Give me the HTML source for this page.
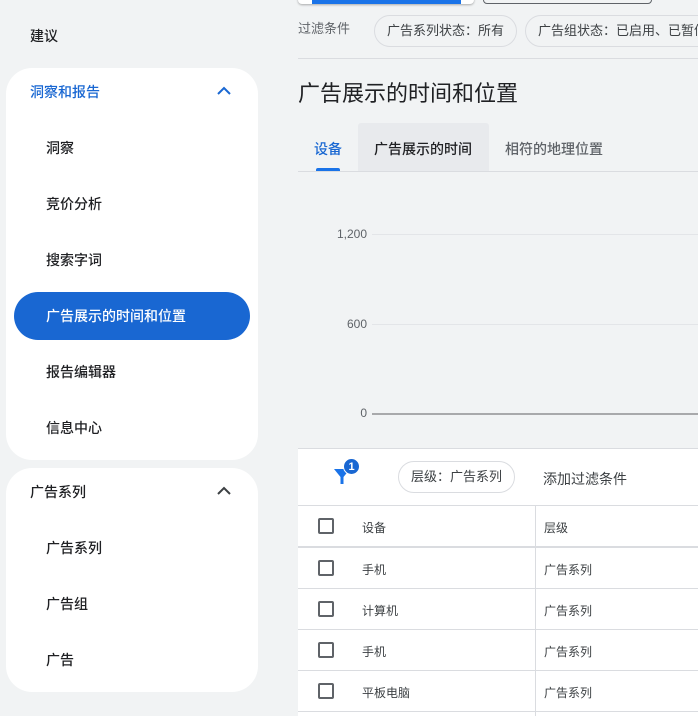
<!DOCTYPE html>
<html><head><meta charset="utf-8"><style>
*{margin:0;padding:0;box-sizing:border-box}
body{width:698px;height:716px;overflow:hidden;background:#f1f3f4;font-family:"Liberation Sans","Noto Sans CJK SC",sans-serif;position:relative;color:#202124}
.a{position:absolute}
.card{position:absolute;left:6px;width:252px;background:#fff;border-radius:26px}
.it{position:absolute;left:46px;font-size:14px;color:#202124;font-weight:500}
.chip{position:absolute;height:32px;border:1px solid #dadce0;border-radius:16px;font-size:13px;color:#3c4043;line-height:30px;padding:0 12px}
.cb{position:absolute;left:318px;width:16px;height:16px;border:2px solid #5f6368;border-radius:2px}
.row{position:absolute;left:298px;width:400px;height:1px;background:#dadce0}
.t{position:absolute;font-size:12px;color:#3c4043}
</style></head><body>
<div class="a" style="left:30px;top:26px;font-size:14px;font-weight:500">建议</div>
<div class="card" style="top:68px;height:392px"></div>
<div class="a" style="left:30px;top:82px;font-size:14px;color:#1967d2;font-weight:500">洞察和报告</div>
<svg class="a" style="left:216px;top:85px" width="16" height="12"><path d="M2 9 L8 3 L14 9" stroke="#1967d2" stroke-width="2" fill="none"/></svg>
<div class="it" style="top:138px">洞察</div>
<div class="it" style="top:194px">竞价分析</div>
<div class="it" style="top:250px">搜索字词</div>
<div class="a" style="left:14px;top:292px;width:236px;height:48px;background:#1967d2;border-radius:24px"></div>
<div class="it" style="top:306px;color:#fff">广告展示的时间和位置</div>
<div class="it" style="top:362px">报告编辑器</div>
<div class="it" style="top:418px">信息中心</div>
<div class="card" style="top:468px;height:224px"></div>
<div class="a" style="left:30px;top:482px;font-size:14px;font-weight:500">广告系列</div>
<svg class="a" style="left:216px;top:485px" width="16" height="12"><path d="M2 9 L8 3 L14 9" stroke="#3c4043" stroke-width="2" fill="none"/></svg>
<div class="it" style="top:538px">广告系列</div>
<div class="it" style="top:594px">广告组</div>
<div class="it" style="top:650px">广告</div>

<div class="a" style="left:298px;top:-8px;width:176px;height:12px;background:#fff;border-radius:4px;box-shadow:0 1px 2px rgba(0,0,0,.3)"></div>
<div class="a" style="left:312px;top:0;width:149px;height:4px;background:#1a73e8"></div>
<div class="a" style="left:483px;top:-8px;width:169px;height:12px;border:1px solid #5f6368;border-radius:4px"></div>
<div class="a" style="left:298px;top:18px;font-size:13px;color:#5f6368">过滤条件</div>
<div class="chip" style="left:374px;top:15px">广告系列状态：所有</div>
<div class="chip" style="left:525px;top:15px;width:200px;white-space:nowrap">广告组状态：已启用、已暂停</div>
<div class="row" style="top:58px"></div>
<div class="a" style="left:298px;top:76px;font-size:22px">广告展示的时间和位置</div>
<div class="a" style="left:358px;top:123px;width:131px;height:48px;background:#e8eaed;border-radius:3px 3px 0 0"></div>
<div class="a" style="left:314px;top:139px;font-size:14px;color:#1967d2;font-weight:500">设备</div>
<div class="a" style="left:316px;top:168px;width:24px;height:3px;background:#1a73e8;border-radius:2px 2px 0 0"></div>
<div class="a" style="left:374px;top:139px;font-size:14px;font-weight:500">广告展示的时间</div>
<div class="a" style="left:505px;top:139px;font-size:14px;color:#5f6368;font-weight:500">相符的地理位置</div>
<div class="row" style="top:171px"></div>
<div class="a" style="left:320px;top:227px;width:47px;text-align:right;font-size:12px;color:#5f6368">1,200</div>
<div class="a" style="left:320px;top:317px;width:47px;text-align:right;font-size:12px;color:#5f6368">600</div>
<div class="a" style="left:320px;top:406px;width:47px;text-align:right;font-size:12px;color:#5f6368">0</div>
<div class="a" style="left:372px;top:234px;width:326px;height:1px;background:#e3e5e8"></div>
<div class="a" style="left:372px;top:324px;width:326px;height:1px;background:#e3e5e8"></div>
<div class="a" style="left:372px;top:413px;width:326px;height:2px;background:#a8a9ab"></div>

<div class="a" style="left:298px;top:448px;width:400px;height:268px;background:#fff;border-top:1px solid #dadce0"></div>
<svg class="a" style="left:333px;top:467px" width="18" height="18"><path d="M1 2 H17 L10.5 10 V17 H7.5 V10 Z" fill="#1a73e8"/></svg>
<div class="a" style="left:343px;top:458px;width:17px;height:17px;border-radius:50%;background:#1967d2;color:#fff;font-size:11px;font-weight:bold;text-align:center;line-height:17px;border:1px solid #fff">1</div>
<div class="chip" style="left:398px;top:461px">层级：广告系列</div>
<div class="a" style="left:543px;top:469px;font-size:14px;color:#3c4043">添加过滤条件</div>
<div class="row" style="top:505px"></div>
<div class="a" style="left:535px;top:506px;width:1px;height:210px;background:#dadce0"></div>
<div class="cb" style="top:518px"></div><div class="t" style="left:362px;top:519px">设备</div><div class="t" style="left:544px;top:519px">层级</div>
<div class="row" style="top:546px;height:2px"></div>
<div class="cb" style="top:560px"></div><div class="t" style="left:362px;top:561px">手机</div><div class="t" style="left:544px;top:561px">广告系列</div>
<div class="row" style="top:588px"></div>
<div class="cb" style="top:601px"></div><div class="t" style="left:362px;top:602px">计算机</div><div class="t" style="left:544px;top:602px">广告系列</div>
<div class="row" style="top:629px"></div>
<div class="cb" style="top:642px"></div><div class="t" style="left:362px;top:643px">手机</div><div class="t" style="left:544px;top:643px">广告系列</div>
<div class="row" style="top:670px"></div>
<div class="cb" style="top:683px"></div><div class="t" style="left:362px;top:684px">平板电脑</div><div class="t" style="left:544px;top:684px">广告系列</div>
<div class="row" style="top:711px"></div>
</body></html>
